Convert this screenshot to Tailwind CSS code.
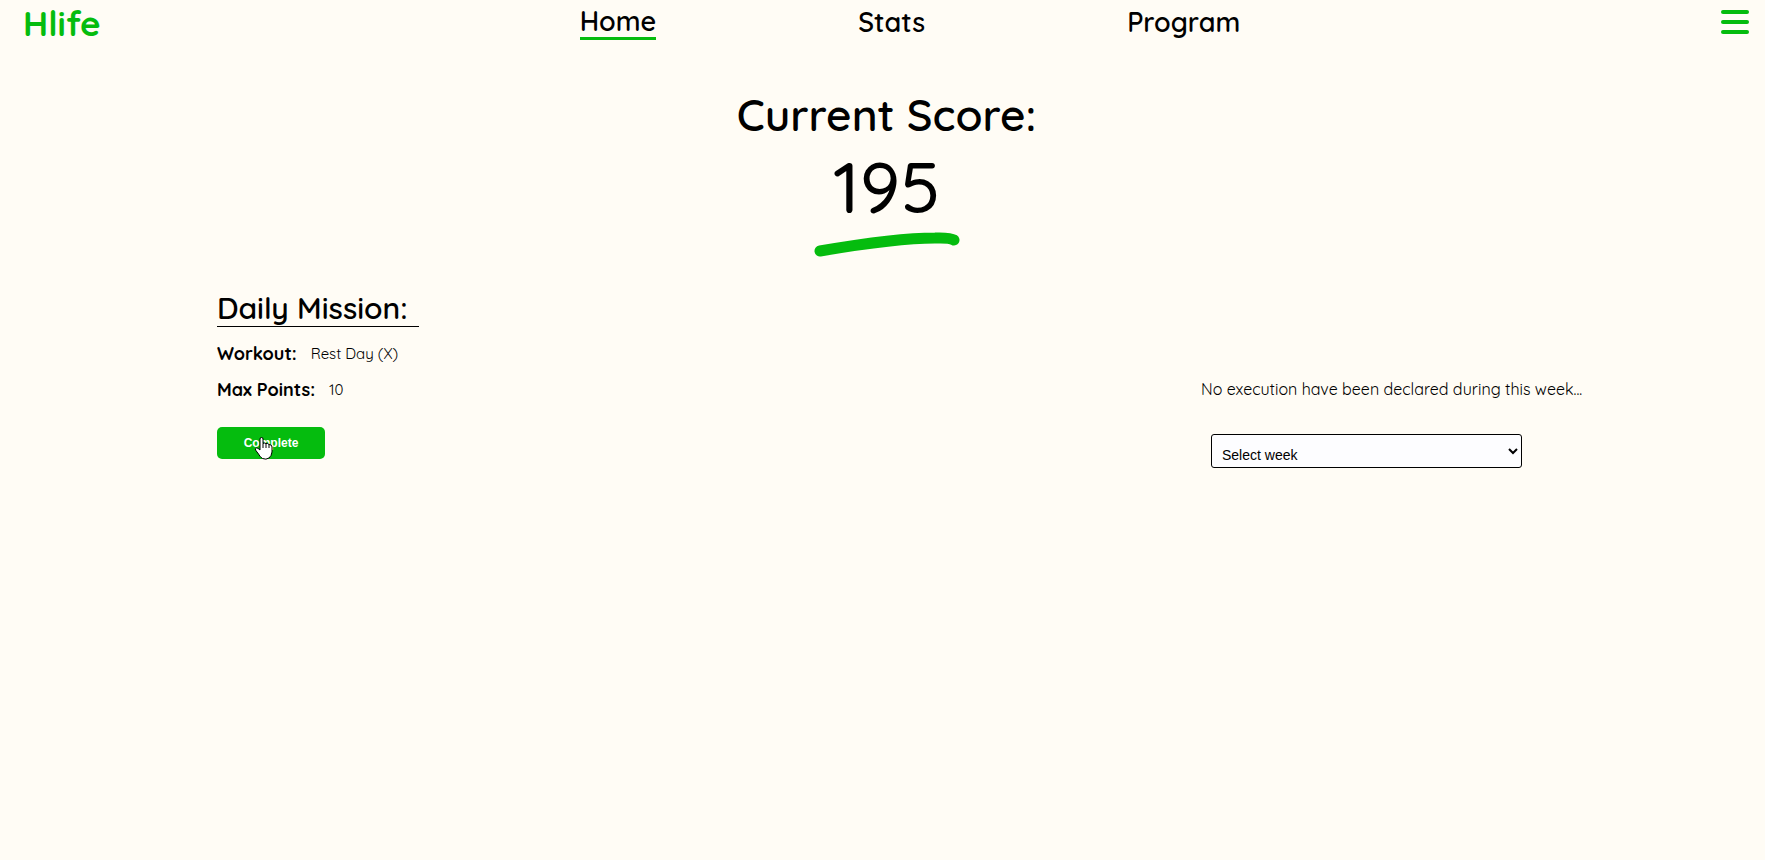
<!DOCTYPE html>
<html lang="en">
<head>
<meta charset="utf-8">
<title>Hlife</title>
<script src="https://cdn.jsdelivr.net/npm/@tailwindcss/browser@4"></script>
</head>
<body class="min-h-screen bg-[#fffcf5] font-[Quicksand,Inter,sans-serif] text-black">
<header class="flex h-11 items-center justify-between pr-4 pl-[23px]">
  <a href="#" class="w-20 pt-px text-[35px] leading-11 font-bold text-[#05bc0e]">Hlife</a>
  <nav class="flex items-center gap-[202px] pr-1 text-[27px] leading-8 font-semibold">
    <a href="#" class="border-b-3 border-[#05bc0e]">Home</a>
    <a href="#">Stats</a>
    <a href="#">Program</a>
  </nav>
  <button type="button" aria-label="Menu" class="flex w-7 flex-col gap-1.5">
    <span class="h-1 w-7 rounded-full bg-[#05bc0e]"></span>
    <span class="h-1 w-7 rounded-full bg-[#05bc0e]"></span>
    <span class="h-1 w-7 rounded-full bg-[#05bc0e]"></span>
  </button>
</header>
<main>
  <section class="flex flex-col items-center pt-[43px] pl-2">
    <h1 class="text-[44px] leading-14 font-semibold">Current Score:</h1>
    <p class="text-[72px] leading-[86px] font-medium">195</p>
    <svg class="h-7 w-[148px]" viewBox="0 0 148 28" fill="none" aria-hidden="true">
      <path d="M7 22C48 15 88 9 122 9Q137 8.500 141 11" stroke="#05bc0e" stroke-width="11" stroke-linecap="round"/>
    </svg>
  </section>
  <div class="flex justify-between pt-[29px] pr-[169px] pl-[217px]">
    <section>
      <h2 class="w-[202px] border-b border-black pt-1 text-[30px] leading-9 font-semibold whitespace-nowrap">Daily Mission:</h2>
      <dl class="mt-2 leading-[35px]">
        <div class="flex items-center gap-3.5"><dt class="text-[18px] font-bold">Workout:</dt><dd class="pt-px text-[15px]">Rest Day (X)</dd></div>
        <div class="flex items-center gap-3.5"><dt class="text-[18px] font-bold">Max Points:</dt><dd class="pt-px text-[15px]">10</dd></div>
      </dl>
      <div class="relative mt-5 w-[108px]">
        <button type="button" class="block h-8 w-full cursor-pointer rounded-[5px] bg-[#05bc0e] font-['Liberation_Sans',Arial,sans-serif] text-[12px] font-bold text-white">Complete</button>
        <svg class="pointer-events-none absolute top-[9px] left-[37px] h-6 w-[19px]" viewBox="0 0 19 24" aria-hidden="true">
          <path d="M6 14V3Q6 1.500 7.500 1.500T9 3V7.500Q10 6.500 12 7.500Q13.500 7 15 8.500Q18 8.500 18 11V16Q17.500 20 15 22Q12 24 8.500 22.500Q6 21 4.500 18L1.500 14Q1 12.500 2.300 12T6 14Z" fill="#fff" stroke="#000" stroke-linejoin="round"/>
          <path d="M9 7.500V12M12 7.500V12M15 8.500V12" stroke="#000"/>
        </svg>
      </div>
    </section>
    <section class="flex w-[395px] flex-col pt-[86px]">
      <p class="text-[16px] leading-[34px] whitespace-nowrap">No execution have been declared during this week...</p>
      <select aria-label="Select week" class="mt-7 ml-[10px] h-[34px] w-[311px] rounded-[3px] border border-black bg-[#fdfdff] px-[6px] pt-2 font-['Liberation_Sans',Arial,sans-serif] text-[14px] text-black">
        <option>Select week</option>
      </select>
    </section>
  </div>
</main>
</body>
</html>
